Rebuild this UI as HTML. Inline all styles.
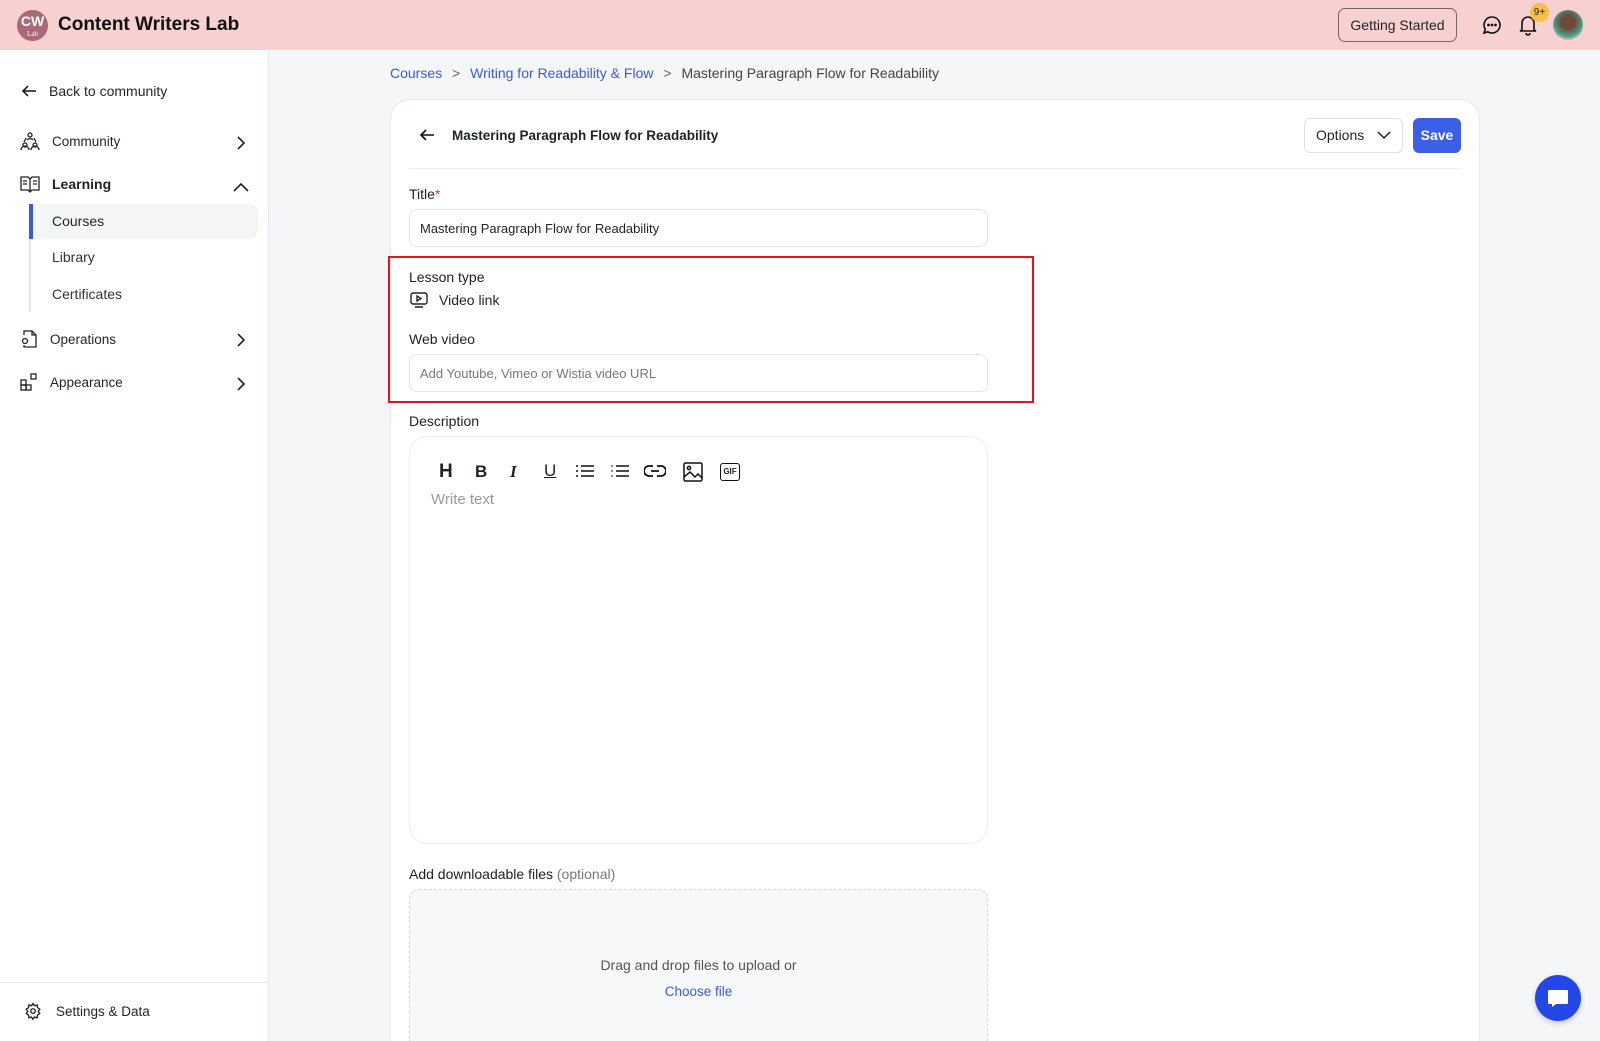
<!DOCTYPE html>
<html><head><meta charset="utf-8"><style>
*{box-sizing:border-box;margin:0;padding:0}
html,body{width:1600px;height:1041px;overflow:hidden}
body{background:#f5f6f8;font-family:"Liberation Sans",sans-serif;color:#1f2328}
#w{position:relative;width:1600px;height:1041px;overflow:hidden;background:#f5f6f8}
.abs{position:absolute}
header{position:absolute;left:0;top:0;width:1600px;height:50px;background:#f7d0d0}
.side{position:absolute;left:0;top:50px;width:269px;height:991px;background:#fff;border-right:1px solid #e5e7eb}
.nav{position:absolute;left:20px;font-size:14px;display:flex;align-items:center;gap:12px}
.chev{position:absolute;left:236px}
.card{position:absolute;left:390px;top:99px;width:1090px;height:942px;background:#fff;border:1px solid #e8e9ec;border-bottom:none;border-radius:20px 20px 0 0}
.lbl{position:absolute;left:409px;font-size:14px;color:#222}
.inp{position:absolute;left:409px;width:579px;height:38px;border:1px solid #e3e4e8;border-radius:8px;font-size:13px;padding:0 10px;display:flex;align-items:center}
</style></head><body><div id="w">
<header>
 <div class="abs" style="left:17px;top:10px;width:31px;height:31px;border-radius:50%;background:#a86a78;color:#fff;text-align:center;font-weight:bold;font-size:14px;line-height:22px">CW<div style="font-size:7px;line-height:4px;font-family:'Liberation Serif',serif;font-weight:normal">Lab</div></div>
 <div class="abs" style="left:58px;top:14px;font-size:19px;font-weight:bold;color:#111">Content Writers Lab</div>
 <div class="abs" style="left:1338px;top:8px;width:119px;height:34px;border:1px solid #7a6565;border-radius:7px;font-size:14px;text-align:center;line-height:32px">Getting Started</div>
 <svg class="abs" style="left:1482px;top:15px" width="20" height="20" viewBox="0 0 20 20" fill="none" stroke="#111" stroke-width="1.6"><path d="M10 2a8 8 0 1 1-4.2 14.8L2 18l1.3-3.7A8 8 0 0 1 10 2z"/><circle cx="6.5" cy="10" r=".6" fill="#111"/><circle cx="10" cy="10" r=".6" fill="#111"/><circle cx="13.5" cy="10" r=".6" fill="#111"/></svg>
 <svg class="abs" style="left:1518px;top:14px" width="20" height="22" viewBox="0 0 20 22" fill="none" stroke="#111" stroke-width="1.6"><path d="M4 16V9a6 6 0 0 1 12 0v7l2 1H2z"/><path d="M8 19a2 2 0 0 0 4 0"/></svg>
 <div class="abs" style="left:1530px;top:3px;width:19px;height:19px;border-radius:50%;background:#f7bf45;font-size:10px;text-align:center;line-height:19px">9+</div>
 <div class="abs" style="left:1553px;top:10px;width:30px;height:30px;border-radius:50%;background:radial-gradient(circle at 50% 40%,#6b4a3a 30%,#4c9c8a 60%,#d9c8b8 80%)"></div>
</header>
<div class="side">
 <div class="nav" style="top:33px;left:21px;font-size:14px"><svg width="16" height="16" viewBox="0 0 16 16" fill="none" stroke="#111" stroke-width="1.5"><path d="M15 8H2M7 3L2 8l5 5"/></svg>Back to community</div>
 <div class="nav" style="top:81px;font-size:13.5px"><svg width="20" height="20" viewBox="0 0 20 20" fill="none" stroke="#222" stroke-width="1.3"><circle cx="10" cy="4" r="2"/><circle cx="5" cy="14" r="2"/><circle cx="15" cy="14" r="2"/><path d="M7 9a4 4 0 0 1 6 0M1 19a4 4 0 0 1 8 0M11 19a4 4 0 0 1 8 0M4 11l2-4M16 11l-2-4"/></svg>Community</div>
 <div class="nav" style="top:125px;font-weight:bold"><svg width="20" height="18" viewBox="0 0 20 18" fill="none" stroke="#222" stroke-width="1.3"><path d="M1 2h7l2 2 2-2h7v13h-7l-2 2-2-2H1z M10 4v13 M3 6h4M3 9h4M13 6h4M13 9h4"/></svg>Learning</div>
 <svg class="chev" style="top:86px" width="10" height="14" viewBox="0 0 10 14" fill="none" stroke="#222" stroke-width="1.6"><path d="M2 1l6 6-6 6"/></svg>
 <svg class="chev" style="top:132px;left:233px" width="16" height="10" viewBox="0 0 16 10" fill="none" stroke="#222" stroke-width="1.6"><path d="M1 9l7-7 7 7"/></svg>
 <div class="abs" style="left:29px;top:154px;width:2px;height:108px;background:#e5e7eb"></div>
 <div class="abs" style="left:29px;top:154px;width:229px;height:35px;background:#f4f5f7;border-radius:0 8px 8px 0;border-left:4px solid #3b5bdb"></div>
 <div class="abs" style="left:52px;top:163px;font-size:14px">Courses</div>
 <div class="abs" style="left:52px;top:199px;font-size:14px;color:#333">Library</div>
 <div class="abs" style="left:52px;top:236px;font-size:14px;color:#333">Certificates</div>
 <div class="nav" style="top:279px;font-size:13.5px"><svg width="18" height="20" viewBox="0 0 18 20" fill="none" stroke="#222" stroke-width="1.3"><path d="M4 6V2h8l4 4v12H4v-2M12 2v4h4"/><circle cx="5" cy="12" r="2.5"/></svg>Operations</div>
 <svg class="chev" style="top:283px" width="10" height="14" viewBox="0 0 10 14" fill="none" stroke="#222" stroke-width="1.6"><path d="M2 1l6 6-6 6"/></svg>
 <div class="nav" style="top:323px;font-size:13.5px"><svg width="18" height="18" viewBox="0 0 18 18" fill="none" stroke="#222" stroke-width="1.3"><rect x="1" y="7" width="5" height="5"/><rect x="1" y="12" width="5" height="5"/><rect x="6" y="12" width="5" height="5"/><rect x="11" y="1" width="5" height="5"/></svg>Appearance</div>
 <svg class="chev" style="top:327px" width="10" height="14" viewBox="0 0 10 14" fill="none" stroke="#222" stroke-width="1.6"><path d="M2 1l6 6-6 6"/></svg>
 <div class="abs" style="left:0;top:932px;width:269px;height:1px;background:#e5e7eb"></div>
 <div class="nav" style="top:952px;left:24px;font-size:13.5px;gap:14px"><svg width="18" height="18" viewBox="0 0 24 24" fill="none" stroke="#222" stroke-width="1.8"><circle cx="12" cy="12" r="3"/><path d="M12 2l2 3 3.5-1 .5 3.5 3 2-2 3 2 3-3 2-.5 3.5L14 20l-2 3-2-3-3.5 1-.5-3.5-3-2 2-3-2-3 3-2 .5-3.5L10 5z"/></svg>Settings &amp; Data</div>
</div>
<div class="abs" style="left:390px;top:65px;font-size:14px;color:#3b5bdb">Courses <span style="color:#666;margin:0 6px">&gt;</span> Writing for Readability &amp; Flow <span style="color:#666;margin:0 6px">&gt;</span> <span style="color:#444">Mastering Paragraph Flow for Readability</span></div>
<div class="card"></div>
<svg class="abs" style="left:419px;top:128px" width="16" height="14" viewBox="0 0 16 14" fill="none" stroke="#111" stroke-width="1.6"><path d="M15 7H2M7 2L2 7l5 5"/></svg>
<div class="abs" style="left:452px;top:128px;font-size:13.5px;font-weight:bold">Mastering Paragraph Flow for Readability</div>
<div class="abs" style="left:1304px;top:118px;width:99px;height:35px;border:1px solid #dfe1e5;border-radius:6px;font-size:14px;padding-left:11px;line-height:33px">Options<svg class="abs" style="left:72px;top:11px" width="14" height="10" viewBox="0 0 14 10" fill="none" stroke="#222" stroke-width="1.5"><path d="M1 2l6 6 6-6"/></svg></div>
<div class="abs" style="left:1413px;top:118px;width:48px;height:35px;background:#3b5fe6;border-radius:6px;color:#fff;font-weight:bold;font-size:14px;text-align:center;line-height:35px">Save</div>
<div class="abs" style="left:409px;top:168px;width:1053px;height:1px;background:#eceef1"></div>
<div class="lbl" style="top:186px">Title<span style="color:#d33">*</span></div>
<div class="inp" style="top:209px">Mastering Paragraph Flow for Readability</div>
<div class="abs" style="left:388px;top:256px;width:646px;height:147px;border:2px solid #e3141b"></div>
<div class="lbl" style="top:269px">Lesson type</div>
<svg class="abs" style="left:410px;top:292px" width="18" height="16" viewBox="0 0 18 16" fill="none" stroke="#222" stroke-width="1.4"><rect x="1" y="1" width="16" height="11" rx="2"/><path d="M7 4v5l4-2.5z M5 15h8"/></svg>
<div class="abs" style="left:439px;top:292px;font-size:14px">Video link</div>
<div class="lbl" style="top:331px">Web video</div>
<div class="inp" style="top:354px;color:#777">Add Youtube, Vimeo or Wistia video URL</div>
<div class="lbl" style="top:413px">Description</div>
<div class="abs" style="left:409px;top:436px;width:579px;height:408px;border:1px solid #eceef1;border-radius:18px"></div>
<div class="abs" style="left:439px;top:461px;font-size:19px;font-weight:bold">H</div>
<div class="abs" style="left:475px;top:462px;font-size:17px;font-weight:bold">B</div>
<div class="abs" style="left:510px;top:462px;font-size:17px;font-weight:bold;font-style:italic;font-family:'Liberation Serif',serif">I</div>
<div class="abs" style="left:544px;top:461px;font-size:17px;text-decoration:underline">U</div>
<svg class="abs" style="left:575px;top:463px" width="20" height="16" viewBox="0 0 20 16" fill="none" stroke="#111" stroke-width="1.6"><path d="M6 3h13M6 8h13M6 13h13M1 3h2M1 8h2M1 13h2"/></svg>
<svg class="abs" style="left:610px;top:463px" width="20" height="16" viewBox="0 0 20 16" fill="none" stroke="#111" stroke-width="1.6"><path d="M6 3h13M6 8h13M6 13h13"/><path d="M1 3h2M1 8h2M1 13h2" stroke-width="1"/></svg>
<svg class="abs" style="left:644px;top:464px" width="22" height="14" viewBox="0 0 22 14" fill="none" stroke="#111" stroke-width="1.8"><path d="M9 2H5a5 5 0 0 0 0 10h4M13 2h4a5 5 0 0 1 0 10h-4M7 7h8"/></svg>
<svg class="abs" style="left:683px;top:462px" width="20" height="20" viewBox="0 0 20 20" fill="none" stroke="#111" stroke-width="1.5"><rect x="1" y="1" width="18" height="18" rx="1.5"/><circle cx="6" cy="6" r="1.6"/><path d="M1 15l6-5 5 5 3-3 4 4"/></svg>
<div class="abs" style="left:720px;top:463px;width:20px;height:18px;border:1.5px solid #111;border-radius:3px;font-size:8px;font-weight:bold;text-align:center;line-height:15px">GIF</div>
<div class="abs" style="left:431px;top:491px;font-size:15px;color:#999">Write text</div>
<div class="lbl" style="top:866px">Add downloadable files <span style="color:#777">(optional)</span></div>
<div class="abs" style="left:409px;top:889px;width:579px;height:152px;border:1px dashed #d6d8dc;border-bottom:none;border-radius:10px 10px 0 0;background:#f7f8f9"></div>
<div class="abs" style="left:409px;top:957px;width:579px;text-align:center;font-size:14px;color:#555">Drag and drop files to upload or</div>
<div class="abs" style="left:409px;top:984px;width:579px;text-align:center;font-size:13.5px;color:#3b5bdb">Choose file</div>
<div class="abs" style="left:1535px;top:975px;width:46px;height:46px;border-radius:50%;background:#2447e8;box-shadow:0 2px 6px rgba(0,0,0,.2)"></div>
<svg class="abs" style="left:1546px;top:987px" width="24" height="24" viewBox="0 0 24 24"><path d="M3 3h18a1 1 0 0 1 1 1v12a1 1 0 0 1-1 1H10l-4 3v-3H3a1 1 0 0 1-1-1V4a1 1 0 0 1 1-1z" fill="#fff"/></svg>
</div></body></html>
